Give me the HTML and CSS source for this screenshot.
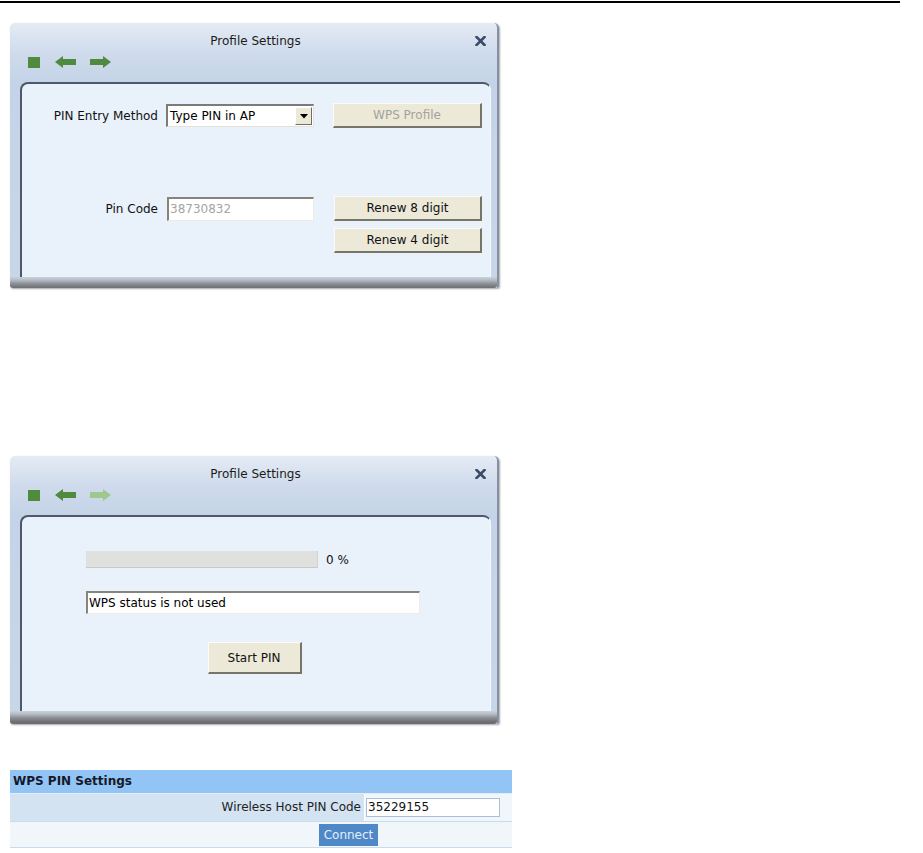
FILE: index.html
```html
<!DOCTYPE html>
<html>
<head>
<meta charset="utf-8">
<link rel="stylesheet" href="styles.css">
</head>
<body>
<div class="rule"></div>

<div class="dialog d1">
  <div class="titlebar">
    <span class="title">Profile Settings</span>
    <svg class="close" width="11" height="10" viewBox="0 0 11 10"><path d="M1.5 1 L9.5 9 M9.5 1 L1.5 9" stroke="#3b4a66" stroke-width="2.6" stroke-linecap="square"/></svg>
  </div>
  <div class="toolbar">
    <span class="stop"></span>
    <svg class="arrow" width="22" height="12" viewBox="0 0 22 12"><polygon points="0,6 8,0 8,3 21,3 21,9 8,9 8,12" fill="#4f8a3f"/></svg>
    <svg class="arrow" width="22" height="12" viewBox="0 0 22 12"><polygon points="22,6 14,0 14,3 1,3 1,9 14,9 14,12" fill="#4f8a3f"/></svg>
  </div>
  <div class="panel">
    <div class="row r1">
      <span class="lbl">PIN Entry Method</span>
      <div class="select">
        <span class="seltext">Type PIN in AP</span>
        <span class="drop"><svg width="8" height="5" viewBox="0 0 8 5"><polygon points="0,0 8,0 4,4.5" fill="#000"/></svg></span>
      </div>
      <span class="btn disabled wpsbtn">WPS Profile</span>
    </div>
    <div class="row r2">
      <span class="lbl">Pin Code</span>
      <div class="field pin">38730832</div>
      <span class="btn renew">Renew 8 digit</span>
    </div>
    <div class="row r3">
      <span class="btn renew r4">Renew 4 digit</span>
    </div>
  </div>
  <div class="bottomband"></div>
</div>

<div class="dialog d2">
  <div class="titlebar">
    <span class="title">Profile Settings</span>
    <svg class="close" width="11" height="10" viewBox="0 0 11 10"><path d="M1.5 1 L9.5 9 M9.5 1 L1.5 9" stroke="#3b4a66" stroke-width="2.6" stroke-linecap="square"/></svg>
  </div>
  <div class="toolbar">
    <span class="stop"></span>
    <svg class="arrow" width="22" height="12" viewBox="0 0 22 12"><polygon points="0,6 8,0 8,3 21,3 21,9 8,9 8,12" fill="#4f8a3f"/></svg>
    <svg class="arrow" width="22" height="12" viewBox="0 0 22 12"><polygon points="22,6 14,0 14,3 1,3 1,9 14,9 14,12" fill="#9fc88f"/></svg>
  </div>
  <div class="panel p2">
    <div class="progrow">
      <div class="progress"></div>
      <span class="pct">0 %</span>
    </div>
    <div class="field status">WPS status is not used</div>
    <div class="startrow"><span class="btn start">Start PIN</span></div>
  </div>
  <div class="bottomband"></div>
</div>

<div class="pintable">
  <div class="pt-head">WPS PIN Settings</div>
  <div class="pt-row">
    <div class="pt-label">Wireless Host PIN Code</div>
    <div class="pt-value"><div class="pt-input">35229155</div></div>
  </div>
  <div class="pt-row2">
    <span class="connect">Connect</span>
  </div>
</div>
</body>
</html>
```

FILE: styles.css
```css
html, body {
  margin: 0;
  padding: 0;
  background: #fff;
}
body {
  font-family: "DejaVu Sans", sans-serif;
  font-size: 12px;
  color: #000;
}
.rule {
  margin-top: 1px;
  width: 900px;
  height: 2px;
  background: #000;
}

/* dialog window */
.dialog {
  margin-left: 10px;
  border-radius: 5px 5px 2px 2px;
  background: linear-gradient(to bottom, #e4ebf4 0px, #cfdbec 30px, #c4d3e7 60px, #c8d6e9 100%);
  border-right: 2px solid #8590a3;
  box-shadow: 1px 1px 2px rgba(0,0,0,0.35);
  padding: 0 6px 0 10px;
  box-sizing: border-box;
  width: 489px;
  position: relative;
}
.d1 { margin-top: 20px; }
.d2 { margin-top: 168px; }

.titlebar {
  position: relative;
  height: 24px;
  padding-top: 6px;
  text-align: center;
  line-height: 24px;
}
.title {
  font-size: 12px;
  color: #1b1b1b;
}
.close {
  position: absolute;
  right: 5px;
  top: 13px;
}
.toolbar {
  height: 18px;
  display: flex;
  align-items: center;
  gap: 12px;
  padding-left: 8px;
}
.stop {
  width: 12px;
  height: 11px;
  background: #4f8a3f;
  margin-right: 3px;
}
.arrow { display: block; }

.panel {
  margin-top: 11px;
  height: 195px;
  box-sizing: border-box;
  background: #e9f2fa;
  border-top: 2px solid #4d5868;
  border-left: 2px solid #4d5868;
  border-right: 1px solid #f6f9fc;
  border-radius: 8px 8px 0 0;
  padding-top: 19px;
}
.p2 { height: 196px; }
.bottomband {
  height: 11px;
  margin-left: -10px;
  margin-right: -6px;
  background: linear-gradient(to bottom, #c9d2dc 0px, #b4bcc6 3px, #8a8d92 7px, #6c6e72 11px);
  border-radius: 0 0 3px 3px;
}
.d2 .bottomband { height: 13px; }

.row {
  display: flex;
  align-items: center;
}
.lbl {
  width: 136px;
  text-align: right;
  color: #111;
}
.r1 .select { margin-left: 8px; }
.r1 .wpsbtn { margin-left: 19px; }
.r2 { margin-top: 68px; }
.r2 .field { margin-left: 9px; }
.r2 .renew { margin-left: 20px; }
.r3 { margin-top: 7px; }
.r4 { margin-left: 312px; }

.select {
  width: 148px;
  height: 23px;
  box-sizing: border-box;
  background: #fff;
  border-top: 2px solid #7b7b78;
  border-left: 2px solid #7b7b78;
  border-right: 1px solid #e4e2d8;
  border-bottom: 1px solid #e4e2d8;
  display: flex;
  align-items: center;
  justify-content: space-between;
  padding-left: 2px;
}
.seltext { color: #000; }
.drop {
  width: 17px;
  height: 18px;
  margin-right: 1px;
  background: #ece9d8;
  box-sizing: border-box;
  border-top: 1px solid #fff;
  border-left: 1px solid #fff;
  border-right: 1px solid #716f64;
  border-bottom: 1px solid #716f64;
  display: flex;
  align-items: center;
  justify-content: center;
}
.drop svg { display: block; }

.btn {
  display: inline-flex;
  align-items: center;
  justify-content: center;
  box-sizing: border-box;
  background: #ece9d8;
  border-top: 1px solid #fbfbf8;
  border-left: 1px solid #fbfbf8;
  border-right: 2px solid #77756a;
  border-bottom: 2px solid #77756a;
  color: #111;
}
.wpsbtn {
  width: 149px;
  height: 25px;
}
.btn.disabled { color: #a3a39c; }
.renew {
  width: 148px;
  height: 25px;
}
.field {
  box-sizing: border-box;
  background: #fff;
  border-top: 2px solid #86847c;
  border-left: 2px solid #86847c;
  border-right: 1px solid #eeece4;
  border-bottom: 1px solid #eeece4;
  display: flex;
  align-items: center;
  padding-left: 1px;
}
.pin {
  width: 147px;
  height: 24px;
  color: #a5a5a5;
}

/* dialog 2 */
.p2 {
  padding-top: 34px;
}
.progrow {
  display: flex;
  align-items: center;
  margin-left: 64px;
}
.progress {
  width: 232px;
  height: 17px;
  box-sizing: border-box;
  background: #e0e0de;
  border-bottom: 1px solid #c9c9c6;
  border-right: 1px solid #d2d2cf;
}
.pct {
  margin-left: 8px;
  color: #111;
}
.status {
  margin-left: 64px;
  margin-top: 23px;
  width: 334px;
  height: 23px;
  color: #000;
}
.startrow {
  margin-top: 28px;
  display: flex;
  justify-content: center;
  padding-right: 3px;
}
.start {
  width: 94px;
  height: 32px;
}

/* web table */
.pintable {
  margin-top: 46px;
  margin-left: 10px;
  width: 502px;
  font-size: 12px;
}
.pt-head {
  height: 23px;
  background: #92c5f5;
  font-weight: bold;
  color: #16182a;
  line-height: 23px;
  padding-left: 3px;
  box-sizing: border-box;
}
.pt-row {
  display: flex;
  height: 28px;
  border-top: 1px solid #e2edf7;
  box-sizing: border-box;
}
.pt-label {
  width: 355px;
  background: #d3e3f2;
  text-align: right;
  line-height: 27px;
  padding-right: 3px;
  box-sizing: border-box;
  color: #222;
  border-right: 1px solid #fff;
}
.pt-value {
  flex: 1;
  background: #f1f6fb;
  display: flex;
  align-items: center;
  padding-left: 1px;
}
.pt-input {
  width: 134px;
  height: 19px;
  box-sizing: border-box;
  background: #fff;
  border: 1px solid #a8c0d8;
  line-height: 17px;
  padding-left: 1px;
  color: #111;
}
.pt-row2 {
  height: 27px;
  background: #f1f6fb;
  border-top: 1px solid #c8dced;
  border-bottom: 1px solid #c8dced;
  box-sizing: border-box;
  display: flex;
  align-items: center;
  padding-left: 309px;
}
.connect {
  width: 59px;
  height: 22px;
  background: #4f88c7;
  color: #e4eef8;
  text-align: center;
  line-height: 22px;
}
```
